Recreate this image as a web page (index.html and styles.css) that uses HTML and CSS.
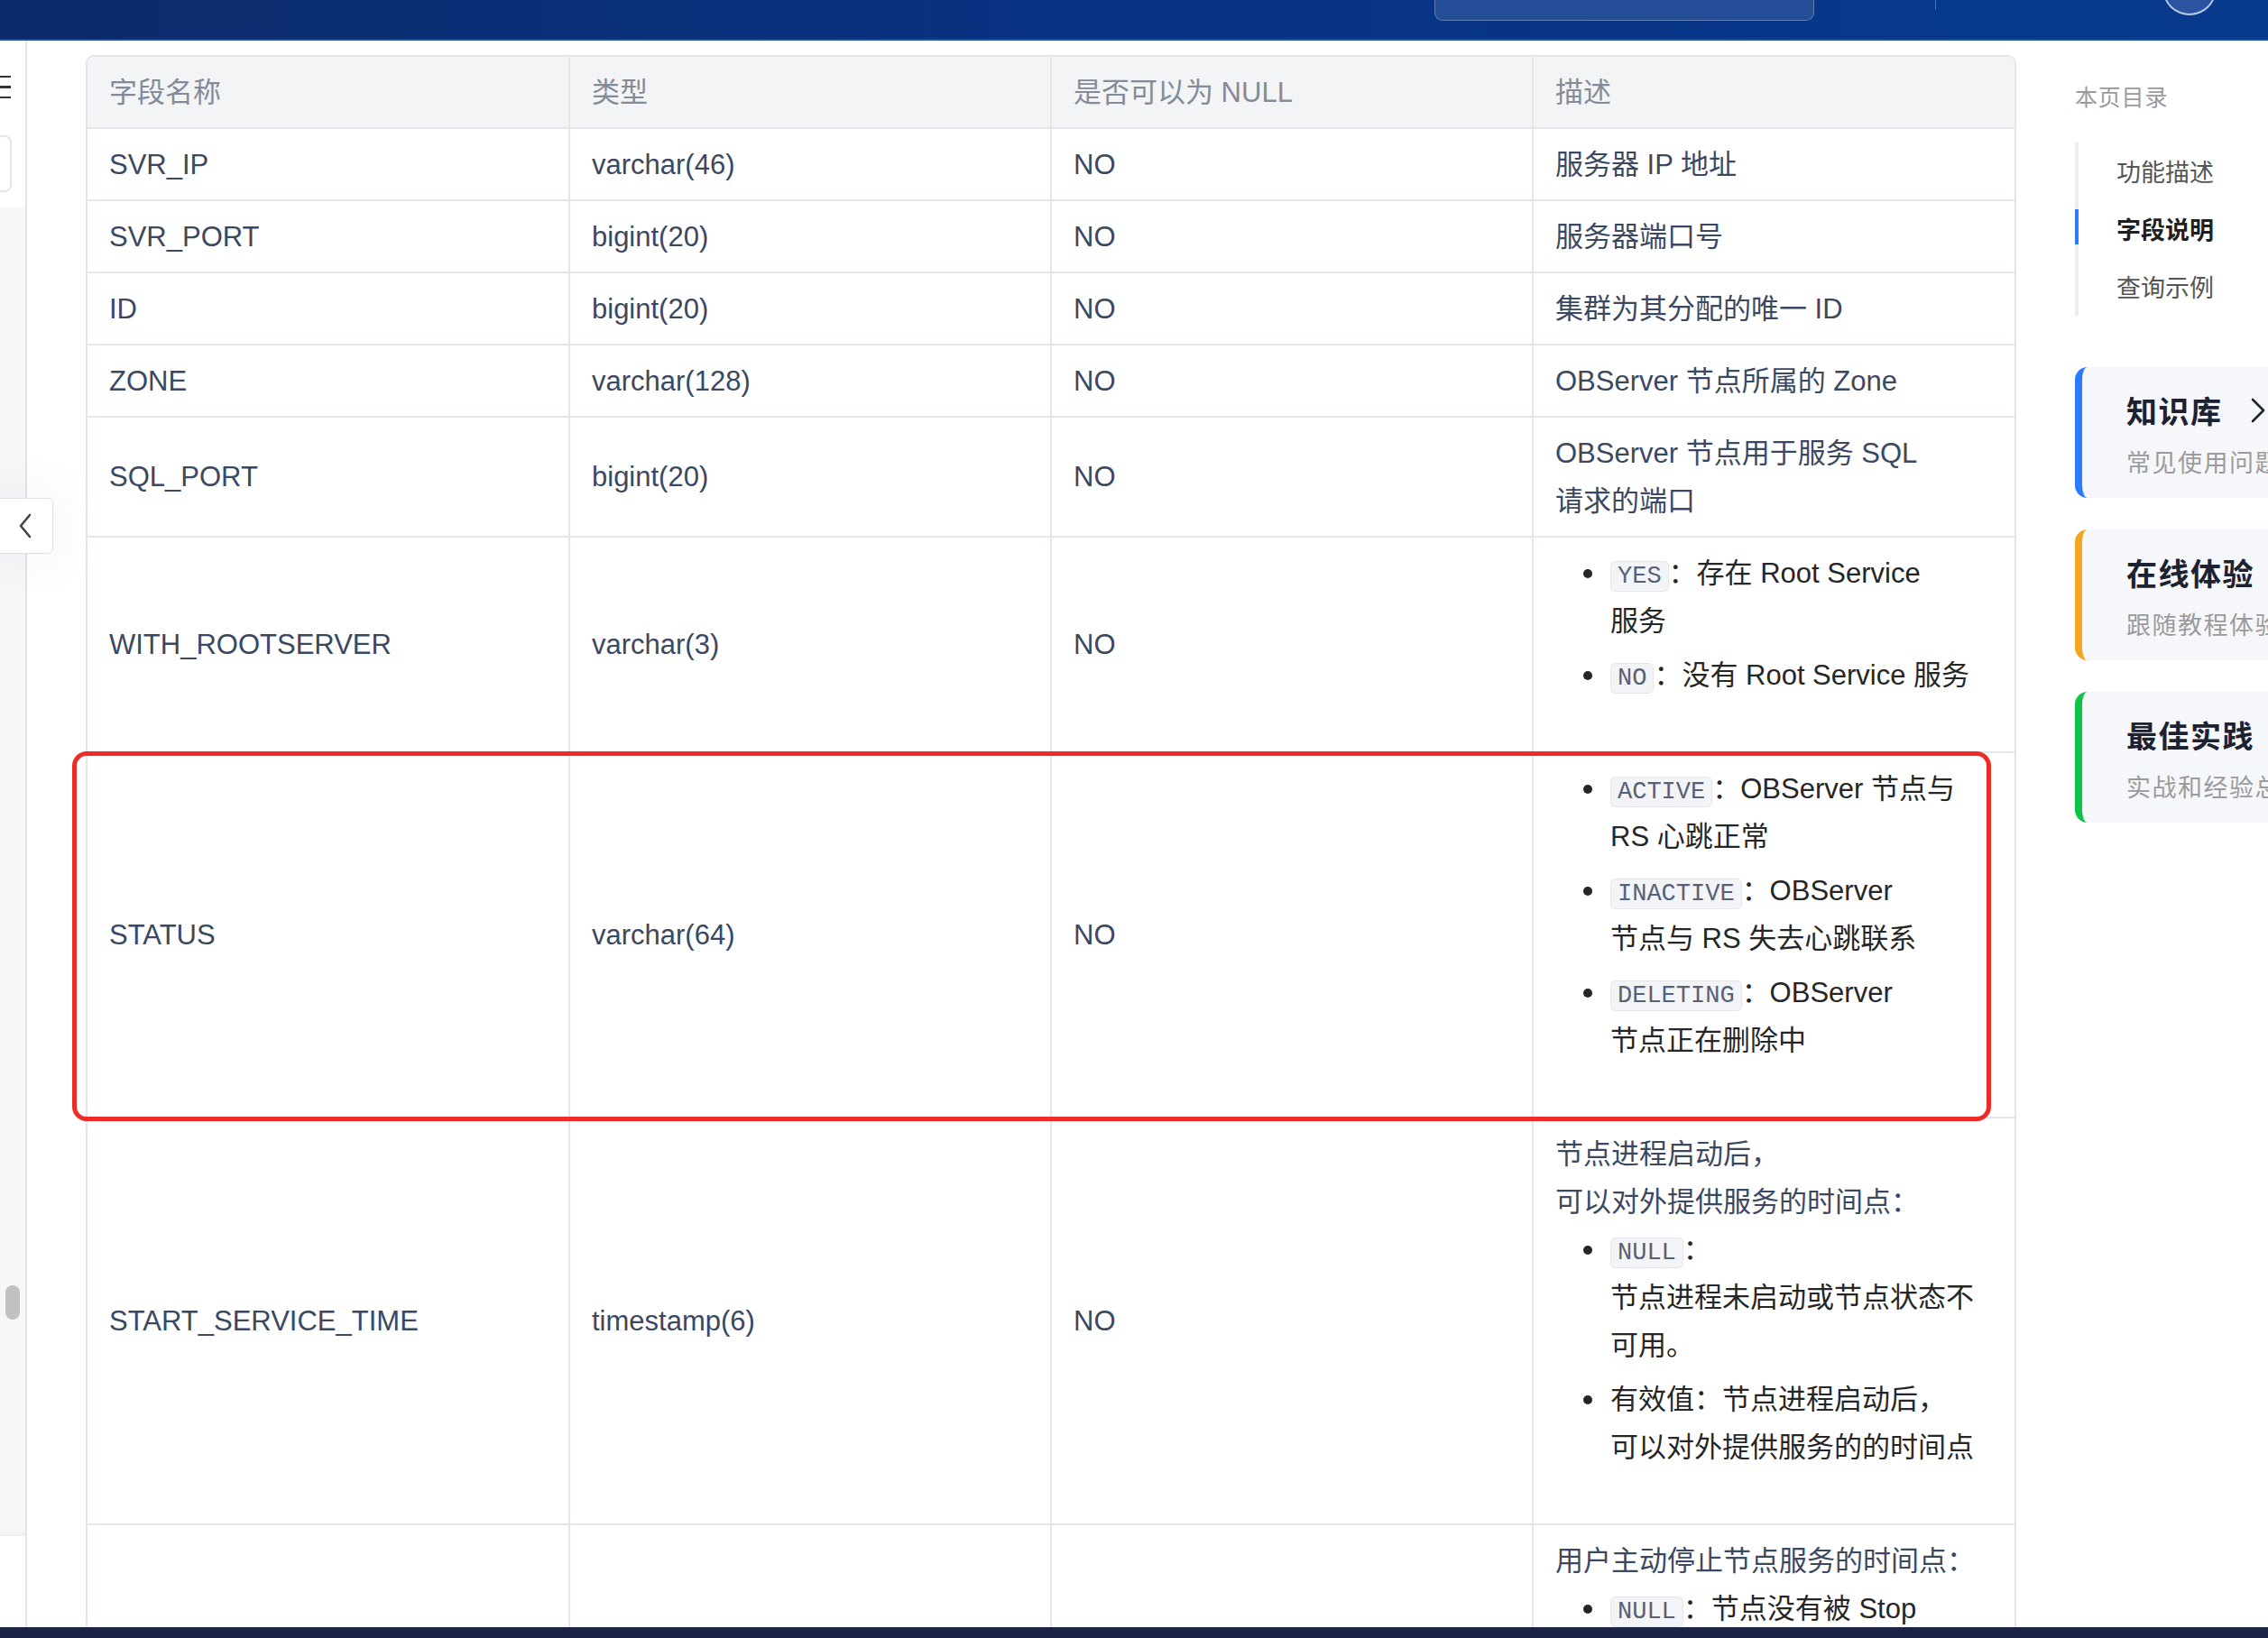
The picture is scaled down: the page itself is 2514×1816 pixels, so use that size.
FILE: index.html
```html
<!DOCTYPE html>
<html lang="zh-CN">
<head>
<meta charset="utf-8">
<title>字段说明</title>
<link rel="stylesheet" href="styles.css">
</head>
<body>
<div class="page">
  <header class="topbar">
    <div class="search"></div>
    <div class="divider"></div>
    <div class="avatar"></div>
  </header>

  <div class="main">
    <aside class="leftnav">
      <div class="menu-icon"><span></span><span></span><span></span></div>
      <div class="nav-search"></div>
      <div class="nav-scroll"><div class="thumb"></div></div>
    </aside>

    <button class="collapse" aria-label="收起">
      <svg width="16" height="28" viewBox="0 0 16 28"><polyline points="13,2 3,14 13,26" fill="none" stroke="#444" stroke-width="2.6" stroke-linecap="round" stroke-linejoin="round"/></svg>
    </button>

    <section class="content">
      <div class="table-wrap">
        <table class="fields">
          <colgroup><col><col><col><col></colgroup>
          <thead>
            <tr><th>字段名称</th><th>类型</th><th>是否可以为 NULL</th><th>描述</th></tr>
          </thead>
          <tbody>
            <tr><td>SVR_IP</td><td>varchar(46)</td><td>NO</td><td>服务器 IP 地址</td></tr>
            <tr><td>SVR_PORT</td><td>bigint(20)</td><td>NO</td><td>服务器端口号</td></tr>
            <tr><td>ID</td><td>bigint(20)</td><td>NO</td><td>集群为其分配的唯一 ID</td></tr>
            <tr><td>ZONE</td><td>varchar(128)</td><td>NO</td><td>OBServer 节点所属的 Zone</td></tr>
            <tr><td>SQL_PORT</td><td>bigint(20)</td><td>NO</td><td>OBServer 节点用于服务 SQL<br>请求的端口</td></tr>
            <tr><td>WITH_ROOTSERVER</td><td>varchar(3)</td><td>NO</td>
              <td><ul>
                <li><code>YES</code>：存在 Root Service<br>服务</li>
                <li><code>NO</code>：没有 Root Service 服务</li>
              </ul></td></tr>
            <tr><td>STATUS</td><td>varchar(64)</td><td>NO</td>
              <td><ul>
                <li><code>ACTIVE</code>：OBServer 节点与<br>RS 心跳正常</li>
                <li><code>INACTIVE</code>：OBServer<br>节点与 RS 失去心跳联系</li>
                <li><code>DELETING</code>：OBServer<br>节点正在删除中</li>
              </ul></td></tr>
            <tr><td>START_SERVICE_TIME</td><td>timestamp(6)</td><td>NO</td>
              <td>节点进程启动后，<br>可以对外提供服务的时间点：<ul>
                <li><code>NULL</code>：<br>节点进程未启动或节点状态不<br>可用。</li>
                <li>有效值：节点进程启动后，<br>可以对外提供服务的的时间点</li>
              </ul></td></tr>
            <tr class="partial"><td></td><td></td><td></td>
              <td>用户主动停止节点服务的时间点：<ul>
                <li><code>NULL</code>：节点没有被 Stop</li>
              </ul></td></tr>
          </tbody>
        </table>
      </div>
      <div class="highlight"></div>
    </section>

    <aside class="toc">
      <div class="toc-title">本页目录</div>
      <div class="toc-list">
        <div class="toc-item">功能描述</div>
        <div class="toc-item active">字段说明</div>
        <div class="toc-item">查询示例</div>
      </div>
      <div class="card blue">
        <div class="card-title">知识库
          <svg class="chev" width="18" height="28" viewBox="0 0 18 28"><polyline points="3,2 15,14 3,26" fill="none" stroke="#1d2233" stroke-width="2.6" stroke-linecap="round" stroke-linejoin="round"/></svg>
        </div>
        <div class="card-sub">常见使用问题汇总</div>
      </div>
      <div class="card orange">
        <div class="card-title">在线体验</div>
        <div class="card-sub">跟随教程体验产品</div>
      </div>
      <div class="card green">
        <div class="card-title">最佳实践</div>
        <div class="card-sub">实战和经验总结</div>
      </div>
    </aside>
  </div>

  <footer class="bottombar"></footer>
</div>
</body>
</html>
```

FILE: styles.css
```css
* { box-sizing: border-box; }

html, body {
  margin: 0;
  padding: 0;
  width: 2514px;
  height: 1816px;
  overflow: hidden;
  background: #ffffff;
  font-family: "Liberation Sans", "Noto Sans CJK SC", sans-serif;
}

.page {
  width: 2514px;
  height: 1816px;
  display: flex;
  flex-direction: column;
  overflow: hidden;
}

/* ---------- top bar ---------- */
.topbar {
  height: 45px;
  flex-shrink: 0;
  background: linear-gradient(90deg, #0b2a69 0%, #083282 45%, #063a8c 100%);
  border-bottom: 2px solid #1c4c9c;
  display: flex;
  justify-content: flex-end;
  align-items: flex-start;
  padding-right: 57px;
  overflow: hidden;
}

.search {
  width: 421px;
  height: 60px;
  margin-top: -37px;
  background: #244e97;
  border: 1px solid rgba(255, 255, 255, 0.28);
  border-radius: 9px;
}

.divider {
  width: 1px;
  height: 11px;
  margin-left: 134px;
  background: rgba(255, 255, 255, 0.3);
}

.avatar {
  width: 60px;
  height: 60px;
  margin-top: -43px;
  margin-left: 251px;
  border-radius: 50%;
  background: #2a53a0;
  border: 2px solid rgba(230, 236, 250, 0.75);
}

/* ---------- main ---------- */
.main {
  height: 1759px;
  flex-shrink: 0;
  display: flex;
  position: relative;
  overflow: hidden;
}

.leftnav {
  width: 30px;
  flex-shrink: 0;
  border-right: 2px solid #e1e4e8;
  display: flex;
  flex-direction: column;
  overflow: hidden;
}

.menu-icon {
  margin-top: 39px;
  width: 12px;
  height: 25px;
  display: flex;
  flex-direction: column;
  justify-content: space-between;
}
.menu-icon span {
  display: block;
  height: 2.4px;
  background: #333333;
}

.nav-search {
  margin-top: 41px;
  margin-left: -40px;
  width: 53px;
  height: 63px;
  border: 2px solid #e4e6ea;
  border-radius: 8px;
  background: #ffffff;
}

.nav-scroll {
  margin-top: 17px;
  height: 1473px;
  width: 28px;
  background: #f7f7f8;
  padding-top: 1195px;
  padding-left: 6px;
  box-shadow: inset 0 -6px 6px -4px rgba(0, 0, 0, 0.05);
}
.thumb {
  width: 16px;
  height: 38px;
  border-radius: 8px;
  background: #c1c1c1;
}

.collapse {
  position: absolute;
  left: -6px;
  top: 507px;
  width: 65px;
  height: 62px;
  padding: 0 0 0 6px;
  background: #ffffff;
  border: 1.5px solid #dcdfe4;
  border-radius: 6px;
  box-shadow: 0 0 40px 14px rgba(120, 130, 150, 0.06);
  display: flex;
  align-items: center;
  justify-content: center;
  z-index: 2;
}
.collapse svg { margin-left: -4px; }

/* ---------- content / table ---------- */
.content {
  position: relative;
  flex-shrink: 0;
  width: 2270px;
  padding: 16px 65px 0 65px;
}

.table-wrap {
  width: 2140px;
  border: 2px solid #e3e6ea;
  border-radius: 9px 9px 0 0;
  overflow: hidden;
}

.fields {
  width: 100%;
  border-collapse: collapse;
  table-layout: fixed;
  font-size: 31px;
  line-height: 53px;
  color: #3b4861;
}

.fields col { width: 25%; }

.fields th,
.fields td {
  text-align: left;
  vertical-align: middle;
  padding: 12.5px 24px 12.5px 24px;
  border-right: 2px solid #e3e6ea;
  border-bottom: 2px solid #e3e6ea;
}
.fields th:last-child,
.fields td:last-child { border-right: none; }

.fields th {
  font-weight: normal;
  color: #838a98;
  background: #f3f4f6;
  height: 79px;
}

.fields tr.partial td { vertical-align: top; }

.fields ul {
  margin: 0 0 46px 0;
  padding-left: 61px;
  color: #262626;
  list-style: none;
}
.fields li {
  position: relative;
}
.fields li::before {
  content: "";
  position: absolute;
  left: -30px;
  top: 22px;
  width: 10px;
  height: 10px;
  border-radius: 50%;
  background: #262626;
}
.fields li + li { margin-top: 7px; }

.fields code {
  font-family: "Liberation Mono", "DejaVu Sans Mono", monospace;
  font-size: 27px;
  line-height: 1;
  color: #566177;
  background: #f3f4f7;
  border: 1px solid #e4e6eb;
  border-radius: 6px;
  padding: 1px 7px;
}

.highlight {
  position: absolute;
  left: 50px;
  top: 788px;
  width: 2127px;
  height: 410px;
  border: 5px solid #ee2b27;
  border-radius: 16px;
  pointer-events: none;
}

/* ---------- right toc ---------- */
.toc {
  width: 214px;
  flex-shrink: 0;
  padding-top: 46px;
  overflow: visible;
}

.toc-title {
  font-size: 25px;
  line-height: 30px;
  color: #9a9a9a;
  letter-spacing: 0.8px;
  font-family: "Noto Sans CJK SC", sans-serif;
}

.toc-list {
  margin-top: 37px;
  border-left: 4px solid #eeeeee;
  position: relative;
}

.toc-item {
  height: 64px;
  line-height: 64px;
  padding-left: 42px;
  font-size: 27px;
  color: #555555;
  white-space: nowrap;
  position: relative;
  font-family: "Noto Sans CJK SC", sans-serif;
}
.toc-item.active {
  color: #1f1f1f;
  font-weight: bold;
}
.toc-item.active::before {
  content: "";
  position: absolute;
  left: -4px;
  top: 10px;
  width: 4px;
  height: 39px;
  background: #2a7bff;
}

.card {
  width: 340px;
  height: 145px;
  margin-bottom: 35px;
  background: #f6f7fa;
  border-radius: 14px;
  border-left: 8px solid #2a7bff;
  padding: 25px 0 0 49px;
  white-space: nowrap;
  font-family: "Noto Sans CJK SC", sans-serif;
}
.toc-list + .card { margin-top: 57px; }
.card.orange { border-left-color: #f5a51f; }
.card.green { border-left-color: #10c246; }

.card-title {
  font-size: 34px;
  line-height: 46px;
  font-weight: bold;
  color: #1d2233;
  letter-spacing: 1.5px;
  display: flex;
  align-items: center;
}
.chev { margin-left: 30px; }

.card-sub {
  margin-top: 16px;
  font-size: 27px;
  line-height: 36px;
  color: #9b9b9b;
  letter-spacing: 1.5px;
}

/* ---------- bottom bar ---------- */
.bottombar {
  height: 12px;
  flex-shrink: 0;
  background: #1b2444;
}
```
